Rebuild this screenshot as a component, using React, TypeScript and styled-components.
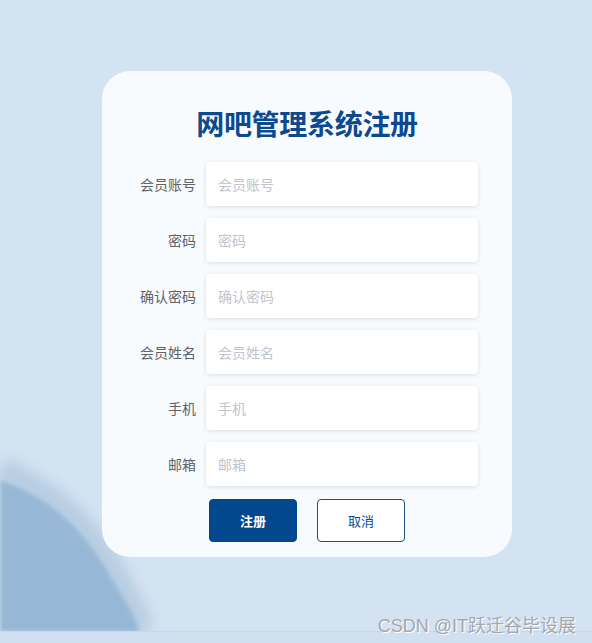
import styled, { createGlobalStyle } from 'styled-components';

const GlobalStyle = createGlobalStyle`
  html, body {
    margin: 0;
    padding: 0;
  }
  body {
    font-family: "Noto Sans CJK SC", "Noto Sans", sans-serif;
    background: #d4e3f2;
  }
`;

const Page = styled.div`
  position: relative;
  width: 592px;
  height: 643px;
  overflow: hidden;
  background: #d4e3f2;
  display: flex;
  align-items: flex-start;
  padding: 71px 0 0 102px;
  box-sizing: border-box;
`;

const Swoosh = styled.svg`
  position: absolute;
  left: 0;
  top: 0;
  width: 592px;
  height: 643px;
  pointer-events: none;
`;

const Card = styled.div`
  position: relative;
  width: 410px;
  height: 486px;
  box-sizing: border-box;
  padding: 36px 34px 0 0;
  border-radius: 28px;
  background: #f8fbfe;
  display: flex;
  flex-direction: column;
`;

const Title = styled.h1`
  margin: 0 0 23px 34px;
  font-size: 28px;
  line-height: 32px;
  font-weight: 700;
  color: #0b4a8e;
  text-align: center;
  letter-spacing: -0.3px;
`;

const Form = styled.div`
  display: flex;
  flex-direction: column;
  gap: 12px;
`;

const Row = styled.div`
  display: flex;
  align-items: center;
  gap: 10px;
`;

const Label = styled.label`
  width: 94px;
  text-align: right;
  font-size: 14px;
  color: #606266;
`;

const Input = styled.input`
  width: 272px;
  height: 44px;
  box-sizing: border-box;
  padding: 0 12px;
  border: none;
  border-radius: 4px;
  background: #fff;
  box-shadow: 0 1px 4px rgba(0, 0, 0, 0.12);
  font-family: "Noto Sans CJK SC", sans-serif;
  font-size: 14px;
  color: #606266;
  outline: none;
  &::placeholder {
    color: #c0c4cc;
  }
`;

const Actions = styled.div`
  display: flex;
  gap: 20px;
  margin: 13px 0 0 107px;
`;

const Button = styled.button<{ primary?: boolean }>`
  width: 88px;
  height: 43px;
  border-radius: 4px;
  font-family: "Noto Sans CJK SC", sans-serif;
  font-size: 13px;
  cursor: pointer;
  border: 1px solid ${p => (p.primary ? '#03478f' : '#1c4f86')};
  background: ${p => (p.primary ? '#03478f' : '#ffffff')};
  color: ${p => (p.primary ? '#ffffff' : '#0b4a8e')};
  font-weight: ${p => (p.primary ? 700 : 400)};
`;

const Watermark = styled.div`
  position: absolute;
  right: 16px;
  bottom: 6px;
  font-family: "Liberation Sans", "Noto Sans CJK SC", sans-serif;
  font-size: 18px;
  color: #a3a8ae;
  text-shadow: 1px 1px 0 #ffffff;
`;

const fields = ['会员账号', '密码', '确认密码', '会员姓名', '手机', '邮箱'];

function App() {
  return (
    <>
      <GlobalStyle />
      <Page>
        <Swoosh viewBox="0 0 592 643">
          <defs>
            <filter id="soft" x="-50%" y="-50%" width="200%" height="200%">
              <feGaussianBlur stdDeviation="7" />
            </filter>
            <filter id="softer" x="-50%" y="-50%" width="200%" height="200%">
              <feGaussianBlur stdDeviation="2" />
            </filter>
          </defs>
          <path
            d="M0 470 C 45 490, 85 520, 112 570 S 136 615, 142 632"
            fill="none"
            stroke="#b7cde2"
            strokeWidth="26"
            filter="url(#soft)"
          />
          <path
            d="M0 480 C 45 495, 80 525, 105 567 S 132 610, 140 632 L 0 632 Z"
            fill="#96b8d6"
            filter="url(#softer)"
          />
          <rect x="0" y="632" width="592" height="11" fill="#d0e0f0" />
          <rect x="0" y="631" width="592" height="1" fill="#c6d8eb" />
        </Swoosh>
        <Card>
          <Title>网吧管理系统注册</Title>
          <Form>
            {fields.map(f => (
              <Row key={f}>
                <Label>{f}</Label>
                <Input placeholder={f} type={f.includes('密码') ? 'password' : 'text'} />
              </Row>
            ))}
          </Form>
          <Actions>
            <Button primary>注册</Button>
            <Button>取消</Button>
          </Actions>
        </Card>
        <Watermark>CSDN @IT跃迁谷毕设展</Watermark>
      </Page>
    </>
  );
}

export default App;
